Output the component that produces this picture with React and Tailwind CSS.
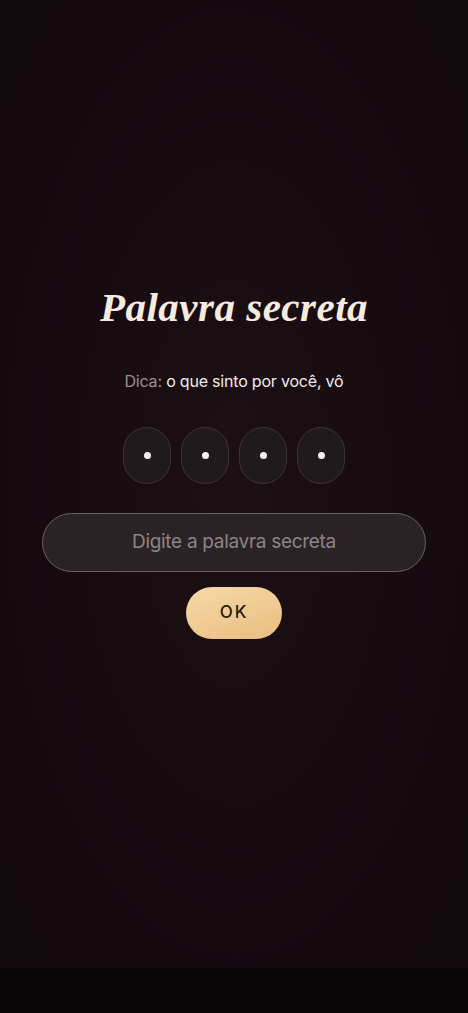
export default function App() {
  return (
    <div className="w-full min-h-screen bg-[#140a0e] flex flex-col" style={{ fontFamily: "Inter, 'Noto Sans', sans-serif" }}>
      <div className="h-[968px] flex flex-col items-center bg-[radial-gradient(ellipse_at_center,#1c1014_0%,#150a0f_60%,#12090d_100%)]">
        <div className="pt-[284px]" />
        <h1 className="h-[46px] leading-[46px] text-[41px] font-bold italic text-[#f7ebe0] tracking-[0.5px]" style={{ fontFamily: "'Liberation Serif', serif" }}>
          Palavra secreta
        </h1>
        <p className="mt-[39px] h-[24px] leading-[24px] text-[16px] tracking-[-0.2px]">
          <span className="text-[#9a9094]">Dica:</span>
          <span className="text-[#f2ece9]"> o que sinto por você, vô</span>
        </p>
        <div className="mt-[34px] flex gap-[10px]">
          {[0, 1, 2, 3].map((i) => (
            <div key={i} className="w-[48px] h-[57px] rounded-[24px] border border-[#3d3236] bg-[#211a1d] flex items-center justify-center">
              <div className="w-[7px] h-[7px] rounded-full bg-[#f7f2ef]" />
            </div>
          ))}
        </div>
        <div className="mt-[29px] w-[384px] h-[59px] rounded-full border border-[#6b6063] bg-[#2a2225] flex items-center justify-center">
          <span className="text-[19px] text-[#8d8487] tracking-[-0.3px]">Digite a palavra secreta</span>
        </div>
        <button className="mt-[15px] w-[96px] h-[52px] rounded-full bg-[linear-gradient(160deg,#f6d9a8_0%,#e9bd80_100%)] text-[#2a1a14] text-[17px] font-medium tracking-[2px] flex items-center justify-center">
          OK
        </button>
      </div>
      <div className="h-[45px] bg-[#070505]" />
    </div>
  );
}
